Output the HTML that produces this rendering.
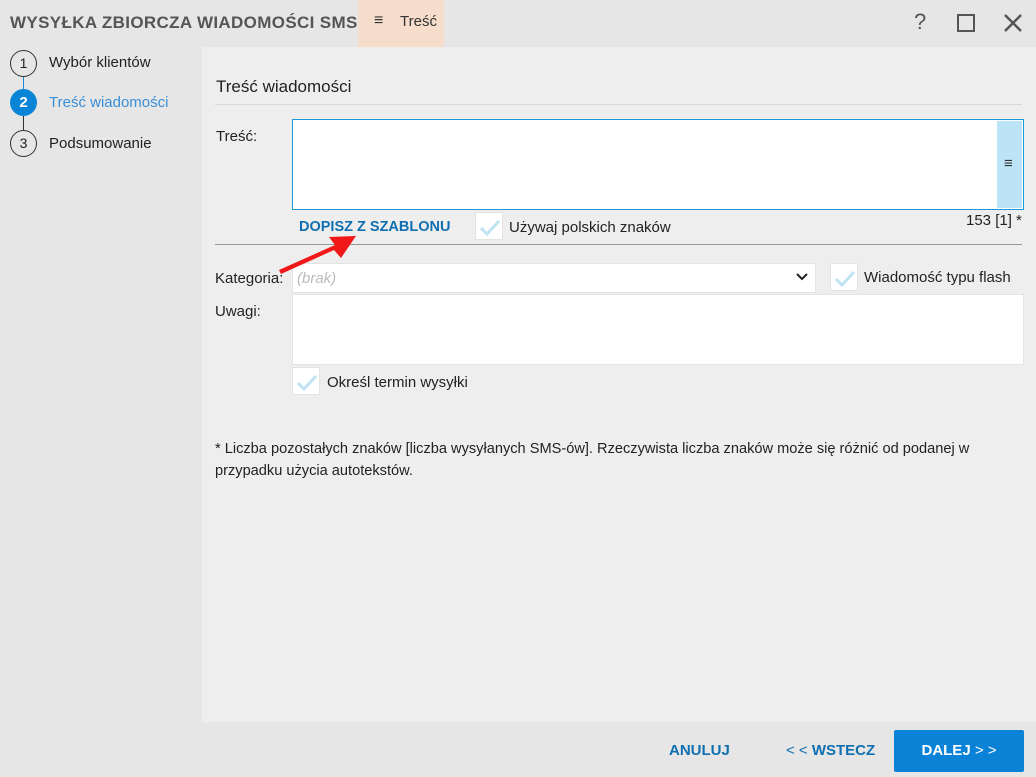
<!DOCTYPE html>
<html><head><meta charset="utf-8"><style>
*{margin:0;padding:0;box-sizing:border-box}
body{width:1036px;height:777px;background:#e6e6e6;font-family:"Liberation Sans",sans-serif;position:relative;overflow:hidden;color:#222;font-size:15px}
.a{position:absolute;white-space:nowrap}
.cb{position:absolute;width:28px;height:28px;background:#fff;border:1px solid #e4e4e4}
.cb svg{position:absolute;left:3px;top:4px}
</style></head><body>
<div class="a" style="left:10px;top:13px;font-size:17px;font-weight:bold;color:#555;letter-spacing:0.35px">WYSYŁKA ZBIORCZA WIADOMOŚCI SMS</div>
<div class="a" style="left:358px;top:0;width:86px;height:47px;background:#f6dccb"></div>
<div class="a" style="left:374px;top:12px;font-size:16px;color:#333">≡</div>
<div class="a" style="left:400px;top:13px;font-size:15px;color:#333">Treść</div>
<div class="a" style="left:914px;top:9px;font-size:22px;color:#555">?</div>
<div class="a" style="left:957px;top:14px;width:18px;height:18px;border:2.5px solid #555"></div>
<svg class="a" style="left:1003px;top:13px" width="20" height="20"><path d="M2 2L18 18M18 2L2 18" stroke="#555" stroke-width="2.5"/></svg>

<div class="a" style="left:23px;top:70px;width:1px;height:68px;background:#333"></div>
<div class="a" style="left:23px;top:70px;width:1px;height:22px;background:#1e88d0"></div>
<div class="a" style="left:10px;top:50px;width:27px;height:27px;border:1.5px solid #333;border-radius:50%;background:#e6e6e6;text-align:center;line-height:24px;font-size:14px">1</div>
<div class="a" style="left:10px;top:89px;width:27px;height:27px;border-radius:50%;background:#0a84d6;color:#fff;font-weight:bold;text-align:center;line-height:27px;font-size:15px">2</div>
<div class="a" style="left:10px;top:130px;width:27px;height:27px;border:1.5px solid #333;border-radius:50%;background:#e6e6e6;text-align:center;line-height:24px;font-size:14px">3</div>
<div class="a" style="left:49px;top:54px">Wybór klientów</div>
<div class="a" style="left:49px;top:94px;color:#3a8fd8">Treść wiadomości</div>
<div class="a" style="left:49px;top:135px">Podsumowanie</div>

<div class="a" style="left:202px;top:47px;width:834px;height:675px;background:#eeeeee"></div>
<div class="a" style="left:216px;top:77px;font-size:17px;color:#222">Treść wiadomości</div>
<div class="a" style="left:215px;top:104px;width:807px;height:1px;background:#d8d8d8"></div>
<div class="a" style="left:216px;top:128px">Treść:</div>
<div class="a" style="left:292px;top:119px;width:732px;height:91px;background:#fff;border:1.5px solid #1a9ad6"></div>
<div class="a" style="left:997px;top:121px;width:25px;height:87px;background:#bce3f6"></div>
<div class="a" style="left:1004px;top:155px;font-size:15px;font-weight:bold;color:#333">≡</div>
<div class="a" style="left:299px;top:219px;font-weight:bold;color:#0f6fb0;font-size:14.5px">DOPISZ Z SZABLONU</div>
<div class="cb" style="left:475px;top:212px"><svg width="22" height="20"><path d="M2 11l6 6L20 4" stroke="#bfe3f3" stroke-width="3" fill="none"/></svg></div>
<div class="a" style="left:509px;top:219px">Używaj polskich znaków</div>
<div class="a" style="left:966px;top:212px">153 [1] *</div>
<div class="a" style="left:215px;top:244px;width:807px;height:1px;background:#999"></div>

<div class="a" style="left:215px;top:270px">Kategoria:</div>
<div class="a" style="left:292px;top:263px;width:524px;height:30px;background:#fff;border:1px solid #e4e4e4"></div>
<div class="a" style="left:297px;top:270px;color:#bbb;font-style:italic">(brak)</div>
<svg class="a" style="left:796px;top:273px" width="12" height="8"><path d="M1 1l5 5 5-5" stroke="#222" stroke-width="2" fill="none"/></svg>
<div class="cb" style="left:830px;top:263px"><svg width="22" height="20"><path d="M2 11l6 6L20 4" stroke="#bfe3f3" stroke-width="3" fill="none"/></svg></div>
<div class="a" style="left:864px;top:269px">Wiadomość typu flash</div>
<div class="a" style="left:215px;top:303px">Uwagi:</div>
<div class="a" style="left:292px;top:294px;width:732px;height:71px;background:#fff;border:1px solid #e4e4e4"></div>
<div class="cb" style="left:292px;top:367px"><svg width="22" height="20"><path d="M2 11l6 6L20 4" stroke="#bfe3f3" stroke-width="3" fill="none"/></svg></div>
<div class="a" style="left:327px;top:374px">Określ termin wysyłki</div>
<div class="a" style="left:215px;top:438px;font-size:14.6px;line-height:22px;white-space:normal;width:815px">* Liczba pozostałych znaków [liczba wysyłanych SMS-ów]. Rzeczywista liczba znaków może się różnić od podanej w przypadku użycia autotekstów.</div>

<svg class="a" style="left:0;top:0" width="400" height="300"><polygon points="279,270 335,245 329,237 356,236 341,258 334,250 281,274" fill="#f01818"/></svg>

<div class="a" style="left:669px;top:742px;font-weight:bold;color:#0f6fb0">ANULUJ</div>
<div class="a" style="left:786px;top:742px;font-weight:bold;color:#0f6fb0"><span style="font-weight:normal">&lt; &lt;</span> WSTECZ</div>
<div class="a" style="left:894px;top:730px;width:130px;height:42px;background:#0a82d6;border-radius:2px;color:#fff;font-weight:bold;text-align:center;line-height:42px">DALEJ <span style="font-weight:normal">&gt; &gt;</span></div>
</body></html>
